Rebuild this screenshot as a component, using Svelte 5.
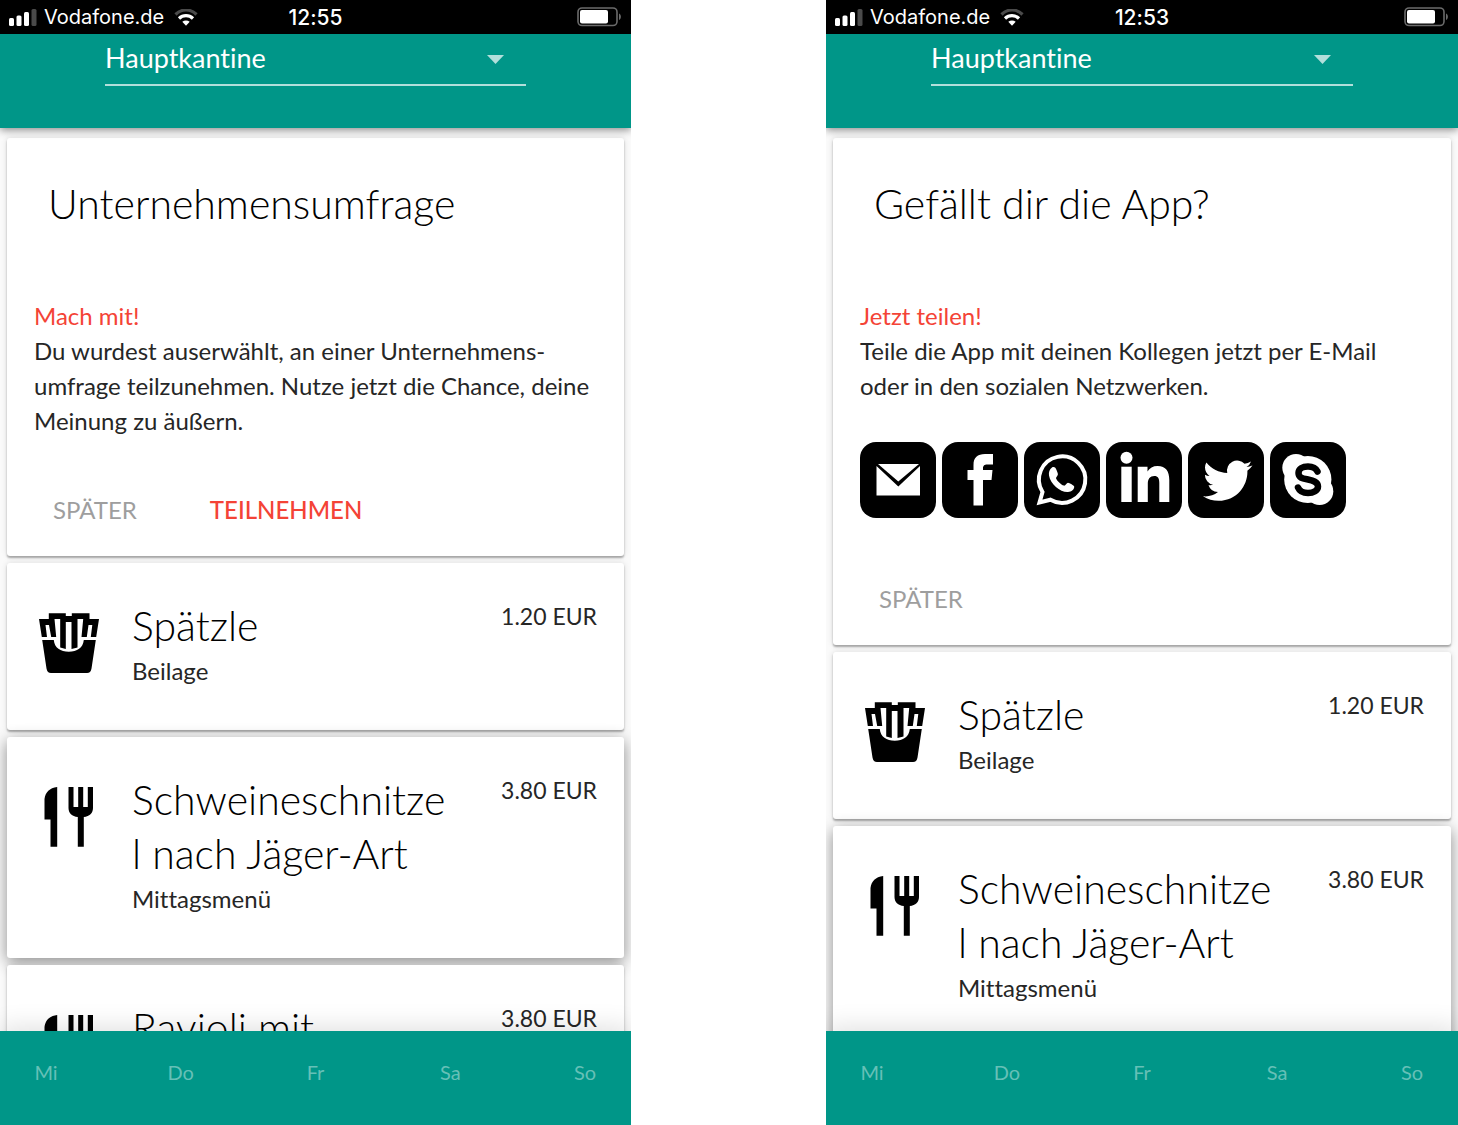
<script lang="ts">
  type Meal = { icon: 'fries' | 'cutlery'; title: string; kind?: string; price: string };
  type Phone = {
    id: string;
    time: string;
    heading: string;
    lead: string;
    text: string;
    share: boolean;
    action?: string;
    meals: Meal[];
  };

  const meals: Meal[] = [
    { icon: 'fries', title: 'Spätzle', kind: 'Beilage', price: '1.20 EUR' },
    { icon: 'cutlery', title: 'Schweineschnitze\nl nach Jäger-Art', kind: 'Mittagsmenü', price: '3.80 EUR' },
    { icon: 'cutlery', title: 'Ravioli mit', price: '3.80 EUR' }
  ];

  const phones: Phone[] = [
    {
      id: 'survey',
      time: '12:55',
      heading: 'Unternehmensumfrage',
      lead: 'Mach mit!',
      text: 'Du wurdest auserwählt, an einer Unternehmens-\numfrage teilzunehmen. Nutze jetzt die Chance, deine\nMeinung zu äußern.',
      share: false,
      action: 'TEILNEHMEN',
      meals
    },
    {
      id: 'share',
      time: '12:53',
      heading: 'Gefällt dir die App?',
      lead: 'Jetzt teilen!',
      text: 'Teile die App mit deinen Kollegen jetzt per E-Mail\noder in den sozialen Netzwerken.',
      share: true,
      meals: meals.slice(0, 2)
    }
  ];

  const days = ['Mi', 'Do', 'Fr', 'Sa', 'So'];
  const networks = ['E-Mail', 'Facebook', 'WhatsApp', 'LinkedIn', 'Twitter', 'Skype'];
</script>

<main class="board">
  {#each phones as phone (phone.id)}
    <section class="phone">
      <div class="status">
        <div class="carrier">
          <svg width="28" height="17" viewBox="0 0 28 17" aria-hidden="true">
            <rect x="0" y="9" width="5" height="8" rx="1.500" fill="#fff" />
            <rect x="7.500" y="6.500" width="5" height="10.500" rx="1.500" fill="#fff" />
            <rect x="15" y="3" width="5" height="14" rx="1.500" fill="#fff" />
            <rect x="22.500" y="0" width="5" height="17" rx="1.500" fill="#4a4a4a" />
          </svg>
          <span>Vodafone.de</span>
          <svg class="wifi" width="24" height="17" viewBox="0 0 24 17" fill="none" aria-hidden="true">
            <path d="M1.500 5.500C7.500-.500 16.500-.500 22.500 5.500" stroke="#4a4a4a" stroke-width="3.200" />
            <path d="M5 9.500C9 5.700 15 5.700 19 9.500" stroke="#fff" stroke-width="3.200" />
            <path d="M8.300 12.800C10.500 11 13.500 11 15.700 12.800L12 16.700Z" fill="#fff" />
          </svg>
        </div>
        <span class="time">{phone.time}</span>
        <svg class="battery" width="45" height="20" viewBox="0 0 45 20" aria-hidden="true">
          <rect x="1" y="1" width="39" height="17.500" rx="4" fill="none" stroke="#6b6b6b" stroke-width="1.600" />
          <rect x="3" y="3" width="28" height="13.500" rx="2" fill="#fff" />
          <path d="M42 6.500C44.500 7.500 44.500 12 42 13Z" fill="#6b6b6b" />
        </svg>
      </div>

      <header class="toolbar">
        <div class="picker">
          <select aria-label="Kantine">
            <option>Hauptkantine</option>
          </select>
          <svg width="17" height="9" viewBox="0 0 17 9" aria-hidden="true"><path d="M0 0H17L8.500 9Z" fill="#b2dfdb" /></svg>
        </div>
      </header>

      <div class="list">
        <article class="card notice">
          <h2>{phone.heading}</h2>
          <p class="copy"><span class="lead">{phone.lead}</span>{'\n' + phone.text}</p>
          {#if phone.share}
            <div class="networks">
              {#each networks as name (name)}
                <button class="tile" aria-label={name}>
                  <svg viewBox="0 0 76 76" fill="#fff" aria-hidden="true">
                    {#if name === 'E-Mail'}
                      <path d="M18 22H59L38.300 39.500Z" />
                      <path d="M16.500 24L38.300 44.500L60 24V53.500H16.500Z" />
                    {:else if name === 'Facebook'}
                      <path d="M31.500 63.500V38H25.500V28H31.500V23C31.500 15.500 35.500 12 43 12H51V22.500H45.500C42 22.500 41 24 41 26.500V28H50.500L49.500 38H41V63.500Z" />
                    {:else if name === 'WhatsApp'}
                      <path d="M18.500 50A23.200 23.200 0 1 1 26.500 57.700L15.500 60.500Z" fill="none" stroke="#fff" stroke-width="4" />
                      <path d="M28 25.500C25.500 27.500 24.500 30 25 33.500C26.500 42.500 36.500 50.500 44 50C47.500 49.800 50.500 47.500 50.200 44.500C50 43.500 45.500 41 44 40.800C42.500 40.800 41.500 44 39.800 43.600C37 42.500 33 39 32 36.200C32 34.800 34.200 33.500 33.900 32C33.500 30 32 26.500 31.300 25.700C30.500 25 29 24.900 28 25.500Z" />
                    {:else if name === 'LinkedIn'}
                      <circle cx="20.500" cy="15.700" r="6" />
                      <path d="M15.300 24.700H25.700V60H15.300Z" />
                      <path d="M31.700 24.700H41.500V29.500C43.500 26 47 24 51.500 24C60 24 63.300 29.500 63.300 38V60H53.300V41C53.300 36.500 52 34 48.300 34C44 34 41.800 37 41.800 41.500V60H31.700Z" />
                    {:else if name === 'Twitter'}
                      <path transform="translate(15 14) scale(2.060)" d="M23.953 4.570a10 10 0 01-2.825.775 4.958 4.958 0 002.163-2.723c-.951.555-2.005.959-3.127 1.184a4.920 4.920 0 00-8.384 4.482C7.690 8.095 4.067 6.130 1.640 3.162a4.822 4.822 0 00-.666 2.475c0 1.710.870 3.213 2.188 4.096a4.904 4.904 0 01-2.228-.616v.060a4.923 4.923 0 003.946 4.827 4.996 4.996 0 01-2.212.085 4.936 4.936 0 004.604 3.417 9.867 9.867 0 01-6.102 2.105c-.390 0-.779-.023-1.170-.067a13.995 13.995 0 007.557 2.209c9.053 0 13.998-7.496 13.998-13.985 0-.210 0-.420-.015-.630A9.935 9.935 0 0024 4.590z" />
                    {:else}
                      <circle cx="37.800" cy="37.500" r="23.600" />
                      <circle cx="26" cy="25.700" r="13.700" />
                      <circle cx="49.600" cy="49.300" r="13.700" />
                      <path d="M47.500 29.500C45.500 25.500 42 24.500 38 24.500C32.500 24.500 28.500 27 28.500 31C28.500 36 33 36.500 38 37.500C43 38.500 48 39.500 48 44.500C48 48.500 43.500 51 38 51C33 51 29.500 49 28 45.500" fill="none" stroke="#000" stroke-width="6.500" stroke-linecap="round" />
                    {/if}
                  </svg>
                </button>
              {/each}
            </div>
          {/if}
          <div class="actions">
            <button class="later">SPÄTER</button>
            {#if phone.action}
              <button class="join">{phone.action}</button>
            {/if}
          </div>
        </article>

        {#each phone.meals as meal, i (meal.title)}
          <article class="card meal" class:raised={i === 1}>
            <svg class="meal-icon" width="60" height="60" viewBox="0 0 60 60" aria-hidden="true">
              {#if meal.icon === 'fries'}
                <path d="M3.200 27H14.800C15.500 35 21.500 38.700 29.800 38.700S44 35 44.800 27H56.800L52.500 55.500C52 58.500 50.500 60 48 60H12C9.500 60 8 58.500 7.500 55.500Z" />
                <path d="M0 6H9.800V0.300H26.800V3H32.800V0.300H50.500V6H60L57.200 24H51.800L53.300 12H49.500L47.800 24H42.500L44.200 6H38.500V34.500L32.500 36V9H26.800V36L21.200 34.500V6H15.500L17.200 24H12.200L10 12H6.500L8 24H2.800Z" />
              {:else}
                <path d="M18.200 0V59.700H11.500V32.500H5.500V12C6.500 5 10.500 1 18.200 0Z" />
                <path d="M29.500 0H34.500V20H39.200V0H44.200V20H48.800V0H54V21C54 26 50.500 29.500 44.800 30V59.700H38.800V30C33 29.500 29.500 26 29.500 21Z" />
              {/if}
            </svg>
            <div class="meal-body">
              <h3>{meal.title}</h3>
              {#if meal.kind}
                <p>{meal.kind}</p>
              {/if}
            </div>
            <span class="price">{meal.price}</span>
          </article>
        {/each}
      </div>

      <nav class="days">
        {#each days as day (day)}
          <button>{day}</button>
        {/each}
      </nav>
    </section>
  {/each}
</main>

<style>
  :global(body) {
    margin: 0;
    background: #fff;
  }

  .board {
    display: grid;
    grid-template-columns: 631fr 632fr;
    column-gap: 195px;
    height: 100vh;
    font-family: Lato, "Open Sans", sans-serif;
    font-variant-ligatures: none;
    color: #262626;
  }

  .phone {
    display: flex;
    flex-direction: column;
    min-width: 0;
    height: 100vh;
    overflow: hidden;
    background: #fafafa;
  }

  .status {
    flex: none;
    display: grid;
    grid-template-columns: 1fr auto 1fr;
    align-items: center;
    height: 34px;
    padding: 0 9px;
    background: #000;
    color: #fff;
    font-family: Inter, Roboto, sans-serif;
    font-size: 20px;
  }

  .carrier {
    display: flex;
    align-items: center;
    gap: 7px;
  }

  .wifi {
    margin-left: 3px;
  }

  .time {
    font-size: 21px;
    font-weight: 500;
  }

  .battery {
    justify-self: end;
  }

  .toolbar {
    flex: none;
    position: relative;
    z-index: 2;
    box-sizing: border-box;
    height: 94px;
    padding: 0 105px;
    background: #009688;
    box-shadow: 0 2px 8px rgba(0, 0, 0, 0.45);
  }

  .picker {
    display: flex;
    align-items: center;
    height: 50px;
    padding-right: 22px;
    border-bottom: 2px solid #b2dfdb;
  }

  select {
    flex: 1;
    appearance: none;
    height: 50px;
    padding: 0 0 3px;
    border: 0;
    background: none;
    color: #fff;
    font-family: inherit;
    font-size: 27px;
    font-variant-ligatures: none;
  }

  button {
    padding: 0;
    border: 0;
    background: none;
    font-family: inherit;
    cursor: pointer;
  }

  .list {
    flex: 1;
    min-height: 0;
    overflow: hidden;
    display: flex;
    flex-direction: column;
    gap: 7px;
    padding: 10px 7px 0;
  }

  .card {
    flex: none;
    border-radius: 3px;
    background: #fff;
    box-shadow: 0 2px 2px rgba(0, 0, 0, 0.3), 0 0 6px rgba(0, 0, 0, 0.12);
  }

  .raised {
    position: relative;
    box-shadow: 0 4px 16px rgba(0, 0, 0, 0.45);
  }

  .raised + .card {
    position: relative;
  }

  h2,
  h3 {
    margin: 0;
    color: #000;
    font-size: 41px;
    font-weight: 300;
    line-height: 54px;
    white-space: pre-line;
  }

  .notice {
    padding: 39px 27px 23px;
  }

  .notice h2 {
    padding-left: 14px;
  }

  .copy {
    margin: 67px 0 0;
    font-size: 24px;
    line-height: 35px;
    white-space: pre-line;
  }

  .lead {
    color: #f44336;
  }

  .networks {
    display: flex;
    gap: 6px;
    padding: 39px 0 9px;
  }

  .tile {
    width: 76px;
    height: 76px;
    border-radius: 16px;
    background: #000;
  }

  .tile svg {
    display: block;
  }

  .actions {
    display: flex;
    gap: 73px;
    margin-top: 47px;
    padding-left: 19px;
  }

  .actions button {
    height: 48px;
    font-size: 24px;
  }

  .actions .later {
    color: #9e9e9e;
  }

  .actions .join {
    color: #f44336;
    font-weight: 500;
  }

  .meal {
    display: flex;
    align-items: flex-start;
    padding: 36px 27px 42px 32px;
  }

  .meal-icon {
    flex: none;
    margin-top: 14px;
  }

  .meal-body {
    flex: 1;
    min-width: 0;
    padding-left: 33px;
  }

  .meal-body p {
    margin: 0;
    font-size: 24px;
    line-height: 35px;
  }

  .price {
    font-size: 23px;
    line-height: 35px;
    white-space: nowrap;
  }

  .days {
    flex: none;
    position: relative;
    z-index: 2;
    display: flex;
    justify-content: space-between;
    align-items: center;
    box-sizing: border-box;
    height: 94px;
    padding: 0 32px 12px;
    background: #009688;
    box-shadow: 0 -4px 24px rgba(0, 0, 0, 0.12);
  }

  .days button {
    width: 28px;
    color: #66c0b7;
    font-size: 20px;
    text-align: center;
  }
</style>
